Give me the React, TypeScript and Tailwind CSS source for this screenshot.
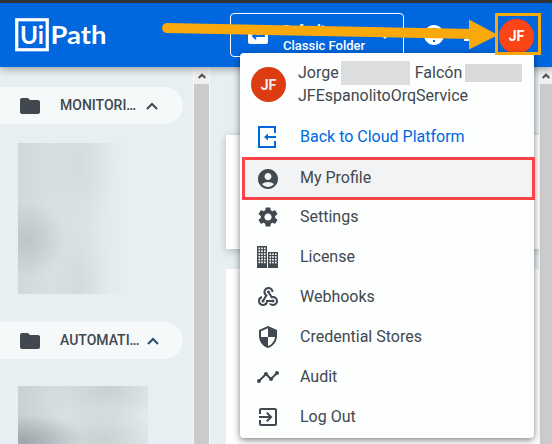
import type { ReactNode } from "react";
import {
  MdAccountCircle,
  MdExitToApp,
  MdFolder,
  MdHelp,
  MdSecurity,
  MdSettings,
  MdTimeline,
  MdWebhook,
} from "react-icons/md";

function Logo() {
  return (
    <svg className="ml-[15px] h-[34px] w-[92px]" viewBox="15 19 92 34" fill="#fff">
      <rect x="16.75" y="20.75" width="30.5" height="30" fill="none" stroke="#fff" strokeWidth="3.2" />
      <text x="20" y="45" fontFamily="Lato, sans-serif" fontWeight="700" fontSize="25" textLength="24" lengthAdjust="spacingAndGlyphs">Ui</text>
      <text x="50.5" y="45" fontFamily="Lato, sans-serif" fontWeight="700" fontSize="25" textLength="56" lengthAdjust="spacingAndGlyphs">Path</text>
    </svg>
  );
}

function Chevron({ color = "#41484f" }: { color?: string }) {
  return (
    <svg className="h-[8px] w-[12px]" viewBox="0 0 12 8" fill="none" stroke={color} strokeWidth="2">
      <path d="M1 7l5-5 5 5" />
    </svg>
  );
}

function ScrollArrow() {
  return (
    <div className="flex h-[17px] shrink-0 items-center justify-center bg-[#f0f0f0]">
      <svg className="h-[6px] w-[8px]" viewBox="0 0 8 6" fill="none" stroke="#505050" strokeWidth="2">
        <path d="M.7 5L4 1.7 7.3 5" />
      </svg>
    </div>
  );
}

function Section({ label, chevron, chevronGap }: { label: string; chevron: string; chevronGap: string }) {
  return (
    <div className="flex h-[37px] w-[183px] shrink-0 items-center rounded-r-full bg-[#f5f9fa] pl-[18px] text-[#41484f]">
      <MdFolder className="size-6" />
      <span className="ml-[18px] text-[14px] font-medium">{label}</span>
      <span className={chevronGap}>
        <Chevron color={chevron} />
      </span>
    </div>
  );
}

function BackIcon() {
  return (
    <svg className="h-[22px] w-[18px]" viewBox="0 0 18 22" fill="none" stroke="#0067df" strokeWidth="2">
      <path d="M17 7V1H1v20h16v-6" />
      <path d="M18 11H7" />
      <path d="M10 7.5L6 11l4 3.5z" fill="#0067df" stroke="none" />
    </svg>
  );
}

function BuildingsIcon() {
  return (
    <svg className="h-[22px] w-[22px]" viewBox="0 0 22 22" fill="#41484f">
      <path d="M0 0h10v22H0zM11 6h10v16H11z" />
      <g fill="#fff">
        {[1.5, 4.2, 7].map((x) =>
          [1.5, 4.3, 7.1, 9.9, 12.7, 15.5].map((y) => <rect key={`${x}-${y}`} x={x} y={y} width="1.6" height="1.7" />),
        )}
        {[12.5, 15.2, 18].map((x) =>
          [7.3, 10.1, 12.9, 15.7].map((y) => <rect key={`${x}-${y}`} x={x} y={y} width="1.6" height="1.7" />),
        )}
      </g>
    </svg>
  );
}

function Item({ icon, children }: { icon: ReactNode; children: ReactNode }) {
  return (
    <div className="flex h-10 shrink-0 items-center">
      <span className="ml-[12px] flex w-8 justify-center">{icon}</span>
      <span className="ml-4">{children}</span>
    </div>
  );
}

function UserMenu() {
  return (
    <div className="absolute left-[240px] top-[53px] flex h-[385px] w-[294px] flex-col rounded-[4px] bg-[#fdfefe] text-[16px] leading-6 text-[#41484f] shadow-[0_2px_7px_rgba(0,0,0,0.5)]">
      <div className="flex h-[64px] shrink-0 pl-[11px]">
        <div className="mt-[14px] flex size-[35px] items-center justify-center rounded-full bg-[#dc3c12] text-[14px] font-bold text-[#eee]">JF</div>
        <div className="ml-[12px] mt-2">
          <div className="flex h-[23px] items-center">
            <span>Jorge</span>
            <span className="ml-[2px] h-[24px] w-[69px] bg-[#dcdddf]" />
            <span className="ml-[5px]">Falcón</span>
            <span className="ml-[3px] h-[18px] w-[57px] bg-[#d8dadb]" />
          </div>
          <div>JFEspanolitoOrqService</div>
        </div>
      </div>
      <div className="flex h-[40px] shrink-0 items-center text-[#0067df]">
        <span className="ml-[11px] flex w-8 justify-center"><BackIcon /></span>
        <span className="ml-[17px]">Back to Cloud Platform</span>
      </div>
      <div className="ml-[2px] flex h-[43px] w-[293px] shrink-0 items-center border-3 border-[#fb4447] bg-[#f2f3f5]">
        <span className="ml-[7px] flex w-8 justify-center"><MdAccountCircle className="size-6" /></span>
        <span className="ml-4 -mt-[2px]">My Profile</span>
      </div>
      <div className="-mt-[3px]">
        <Item icon={<MdSettings className="size-6" />}>Settings</Item>
        <Item icon={<BuildingsIcon />}>License</Item>
        <Item icon={<MdWebhook className="size-6" />}>Webhooks</Item>
        <Item icon={<MdSecurity className="size-6" />}>Credential Stores</Item>
        <Item icon={<MdTimeline className="size-6" />}>Audit</Item>
        <Item icon={<MdExitToApp className="size-6" />}>Log Out</Item>
      </div>
    </div>
  );
}

function Annotations() {
  return (
    <svg className="absolute left-0 top-0 h-[70px] w-[552px]" viewBox="0 0 552 70">
      <path d="M167 28L474 34" stroke="#faa90c" strokeWidth="10" strokeLinecap="round" />
      <path d="M469 19.5L498 35 469 49.5z" fill="#faa90c" />
      <rect x="496.5" y="14.5" width="43" height="39" fill="none" stroke="#faa90c" strokeWidth="3" />
    </svg>
  );
}

export default function App() {
  return (
    <div className="relative flex h-[444px] w-[552px] flex-col overflow-hidden bg-[#e7eff3] font-['Roboto',sans-serif]">
      <header className="z-10 flex h-[67px] shrink-0 items-center border-t-3 border-[#303236] bg-[#0067df] text-white shadow-[0_2px_8px_rgba(0,0,0,0.35)]">
        <Logo />
        <div className="ml-[123px] flex h-[44px] w-[174px] items-center rounded-[4px] border border-white">
          <svg className="ml-[17px] h-[17px] w-[20px]" viewBox="0 0 20 17">
            <rect width="20" height="17" rx="2" fill="#fff" />
            <path d="M16 3v6H5M8 6l-3 3 3 3M13 5l3-3 3 3" fill="none" stroke="#0067df" strokeWidth="2" />
          </svg>
          <div className="ml-[15px] mt-[5px] text-[13px] leading-[16px]">
            <div className="font-bold">Default</div>
            <div className="font-medium">Classic Folder</div>
          </div>
          <svg className="ml-[15px] mt-[2px] h-[5px] w-[10px]" viewBox="0 0 10 5"><path d="M0 0h10L5 5z" fill="#fff" /></svg>
        </div>
        <MdHelp className="ml-[18px] size-6" />
        <svg className="ml-[13px] size-[16px]" viewBox="0 0 16 16"><path d="M8 4v8M5 13h7" stroke="#fff" strokeWidth="2" /></svg>
        <div className="ml-[24px] mt-[2px] flex size-[35px] shrink-0 items-center justify-center rounded-full bg-[#fa4616] text-[14px] font-bold">JF</div>
      </header>
      <div className="flex min-h-0 grow">
        <nav className="flex w-[193px] shrink-0 flex-col pt-[20px]">
          <Section label="MONITORI…" chevron="#41484f" chevronGap="ml-[10px]" />
          <div className="ml-[18px] mt-[19px] h-[151px] w-[108px] shrink-0 bg-[radial-gradient(ellipse_at_8%_64%,#bcc5c8_0,transparent_28%),radial-gradient(ellipse_at_55%_15%,#d3dbde_0,transparent_45%),radial-gradient(ellipse_at_55%_95%,#d2dadd_0,transparent_38%),linear-gradient(90deg,#d0d8db,#dce4e7_45%,#e6eef1)]" />
          <div className="mt-[28px]">
            <Section label="AUTOMATI…" chevron="#254c6b" chevronGap="ml-[7px]" />
          </div>
          <div className="ml-[18px] mt-[27px] h-[58px] w-[130px] shrink-0 bg-[radial-gradient(ellipse_at_4%_95%,#9ea6a9_0,transparent_35%),radial-gradient(ellipse_at_68%_5%,#c9d0d3_0,transparent_45%),radial-gradient(ellipse_at_65%_95%,#c9d0d2_0,transparent_45%),linear-gradient(90deg,#cad1d4,#d9e1e4_40%,#e1e9ec)]" />
        </nav>
        <div className="flex w-[17px] shrink-0 flex-col border-x border-[#f7f8f8] bg-[#cbcbcb]"><ScrollArrow /></div>
        <main className="flex w-[329px] shrink-0 flex-col gap-[20px] pl-[16px] pt-[68px]">
          <div className="h-[114px] shrink-0 bg-white shadow-[0_2px_8px_rgba(0,0,0,0.22)]" />
          <div className="grow bg-white" />
        </main>
        <div className="flex w-[13px] shrink-0 flex-col border-l border-[#f7f8f8] bg-[#cbcbcb]"><ScrollArrow /></div>
      </div>
      <div className="absolute inset-0 z-20">
        <UserMenu />
        <Annotations />
      </div>
    </div>
  );
}
